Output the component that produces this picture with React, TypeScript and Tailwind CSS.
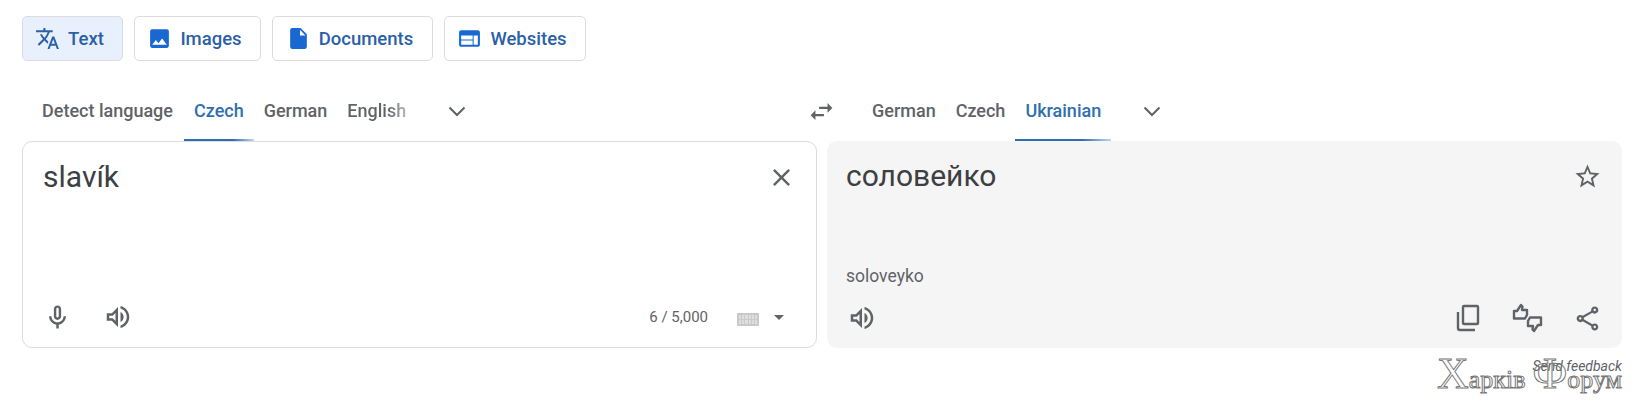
const paths = {
  translate:
    'M12.87 15.07l-2.54-2.51.03-.03c1.74-1.94 2.98-4.17 3.71-6.53H17V4h-7V2H8v2H1v1.99h11.17C11.5 7.92 10.44 9.75 9 11.35 8.07 10.32 7.3 9.19 6.69 8h-2c.73 1.63 1.73 3.17 2.98 4.56l-5.09 5.02L4 19l5-5 3.11 3.11.76-2.04zM18.5 10h-2L12 22h2l1.12-3h4.75L21 22h2l-4.5-12zm-2.62 7l1.62-4.33L19.12 17h-3.24z',
  image: 'M21 19V5c0-1.1-.9-2-2-2H5c-1.1 0-2 .9-2 2v14c0 1.1.9 2 2 2h14c1.1 0 2-.9 2-2zM8.5 13.5l2.5 3.01L14.5 12l4.5 6H5l3.5-4.5z',
  file: 'M14 2H6c-1.1 0-2 .9-2 2v16c0 1.1.9 2 2 2h12c1.1 0 2-.9 2-2V8l-6-6zm-.6 7V3.6L18.6 9h-5.2z',
  web: 'M20 4H4c-1.1 0-1.99.9-1.99 2L2 18c0 1.1.9 2 2 2h16c1.1 0 2-.9 2-2V6c0-1.1-.9-2-2-2zm-5 14H4v-4h11v4zm0-5H4V9h11v4zm5 5h-4V9h4v9z',
  mic: 'M12 14c1.66 0 3-1.34 3-3V5c0-1.66-1.34-3-3-3S9 3.34 9 5v6c0 1.66 1.34 3 3 3zm-1-9c0-.55.45-1 1-1s1 .45 1 1v6c0 .55-.45 1-1 1s-1-.45-1-1V5zM17 11c0 2.76-2.24 5-5 5s-5-2.24-5-5H5c0 3.53 2.61 6.43 6 6.92V21h2v-3.08c3.39-.49 6-3.39 6-6.92h-2z',
  volume:
    'M3 9v6h4l5 5V4L7 9H3zm7-.17v6.34L7.83 13H5v-2h2.83L10 8.83zM16.5 12c0-1.77-1.02-3.29-2.5-4.03v8.05c1.48-.73 2.5-2.25 2.5-4.02zM14 3.23v2.06c2.89.86 5 3.54 5 6.71s-2.11 5.85-5 6.71v2.06c4.01-.91 7-4.49 7-8.77 0-4.28-2.99-7.86-7-8.77z',
  close: 'M19 6.41L17.59 5 12 10.59 6.41 5 5 6.41 10.59 12 5 17.59 6.41 19 12 13.41 17.59 19 19 17.59 13.41 12z',
  star: 'M22 9.24l-7.19-.62L12 2 9.19 8.63 2 9.24l5.46 4.73L5.82 21 12 17.27 18.18 21l-1.63-7.03L22 9.24zM12 15.4l-3.76 2.27 1-4.28-3.32-2.88 4.38-.38L12 6.1l1.71 4.04 4.38.38-3.32 2.88 1 4.28L12 15.4z',
  share:
    'M18 16.08c-.76 0-1.44.3-1.96.77L8.91 12.7c.05-.23.09-.46.09-.7s-.04-.47-.09-.7l7.05-4.11c.54.5 1.25.81 2.04.81 1.66 0 3-1.34 3-3s-1.34-3-3-3-3 1.34-3 3c0 .24.04.47.09.7L8.04 9.81C7.5 9.31 6.79 9 6 9c-1.66 0-3 1.34-3 3s1.34 3 3 3c.79 0 1.5-.31 2.04-.81l7.12 4.16c-.05.21-.08.43-.08.65 0 1.61 1.31 2.92 2.92 2.92 1.61 0 2.92-1.31 2.92-2.92s-1.31-2.92-2.92-2.92zM18 4c.55 0 1 .45 1 1s-.45 1-1 1-1-.45-1-1 .45-1 1-1zM6 13c-.55 0-1-.45-1-1s.45-1 1-1 1 .45 1 1-.45 1-1 1zm12 7.02c-.55 0-1-.45-1-1s.45-1 1-1 1 .45 1 1-.45 1-1 1z',
  swap: 'M6.99 11L3 15l3.99 4v-3H14v-2H6.99v-3zM21 9l-3.99-4v3H10v2h7.01v3L21 9z',
}

function Icon({ d, className }: { d: string; className: string }) {
  return (
    <svg viewBox="0 0 24 24" fill="currentColor" className={className}>
      <path d={d} />
    </svg>
  )
}

function Chevron() {
  return (
    <svg viewBox="0 0 24 24" fill="none" stroke="currentColor" strokeWidth="2" className="h-[24px] w-[24px] text-[#5f6368]">
      <path d="M4.5 8.5 12 16l7.5-7.5" />
    </svg>
  )
}

function ModeButton({ label, d, active, width }: { label: string; d: string; active?: boolean; width: string }) {
  return (
    <button
      className={`flex h-[45px] items-center justify-center gap-[8px] rounded-[5px] border border-[#dadce0] pr-[6px] text-[18.5px] font-medium text-[#2b5fa8] ${width} ${active ? 'bg-[#e8f0fe]' : 'bg-white'}`}
    >
      <Icon d={d} className={`h-[25px] w-[25px] ${active ? 'text-[#2b5fa8]' : 'text-[#1967d2]'}`} />
      <span className="mt-[2px]">{label}</span>
    </button>
  )
}

function Tab({ label, active, fade }: { label: string; active?: boolean; fade?: boolean }) {
  return (
    <div className={`relative flex h-[50px] items-center px-[10px] pb-[12px] text-[18px] font-medium ${active ? 'text-[#2f6fb0]' : 'text-[#5f6368]'}`}>
      <span className={fade ? 'bg-linear-to-r from-[#5f6368] from-70% to-[#b5b8bb] bg-clip-text text-transparent' : ''}>{label}</span>
      {active && <span className="absolute bottom-0 left-0 right-0 h-[2px] bg-linear-to-r from-[#2f6fb0] from-70% to-[#c4d6e8]" />}
    </div>
  )
}

export default function App() {
  return (
    <div className="relative h-[415px] w-[1651px] overflow-hidden bg-white pt-[16px] font-['Roboto',sans-serif]">
      <div className="flex gap-[11px] pl-[22px]">
        <ModeButton label="Text" d={paths.translate} active width="w-[101px]" />
        <ModeButton label="Images" d={paths.image} width="w-[127px]" />
        <ModeButton label="Documents" d={paths.file} width="w-[161px]" />
        <ModeButton label="Websites" d={paths.web} width="w-[142px]" />
      </div>

      <div className="mt-[30px] flex h-[50px] items-center">
        <div className="flex w-[807px] items-center pl-[32px]">
          <Tab label="Detect language" />
          <div className="ml-[1px] flex items-center">
            <Tab label="Czech" active />
            <Tab label="German" />
            <Tab label="English" fade />
          </div>
          <div className="mb-[10px] ml-[29px]">
            <Chevron />
          </div>
        </div>
        <Icon d={paths.swap} className="mb-[10px] h-[29px] w-[29px] text-[#5f6368]" />
        <div className="ml-[26px] flex items-center">
          <Tab label="German" />
          <Tab label="Czech" />
          <Tab label="Ukrainian" active />
          <div className="mb-[10px] ml-[29px]">
            <Chevron />
          </div>
        </div>
      </div>

      <div className="flex gap-[10px] pl-[22px]">
        <div className="flex h-[207px] w-[795px] flex-col justify-between rounded-[10px] border border-[#dadce0] pb-[15px] pl-[20px] pr-[20px] pt-[15px]">
          <div className="flex items-start justify-between">
            <div className="text-[30px] leading-[40px] text-[#3c4043]">slavík</div>
            <Icon d={paths.close} className="mt-[6px] h-[29px] w-[29px] text-[#5f6368]" />
          </div>
          <div className="flex items-center">
            <Icon d={paths.mic} className="h-[29px] w-[29px] text-[#5f6368]" />
            <Icon d={paths.volume} className="ml-[31px] h-[30px] w-[30px] text-[#5f6368]" />
            <div className="ml-auto text-[15px] text-[#5f6368]">6 / 5,000</div>
            <div className="ml-[29px] mt-[5px] grid h-[13px] w-[22px] grid-cols-6 gap-px rounded-[1px] bg-[#c9c9c9] p-[2px]">
              {Array.from({ length: 12 }).map((_, i) => (
                <span key={i} className="bg-[#dedede]" />
              ))}
            </div>
            <div className="ml-[15px] mr-[12px] h-0 w-0 border-x-[5px] border-t-[5px] border-x-transparent border-t-[#5f6368]" />
          </div>
        </div>

        <div className="flex h-[207px] w-[795px] flex-col rounded-[10px] bg-[#f5f5f5] pb-[15px] pl-[19px] pr-[20px] pt-[15px]">
          <div className="flex items-start justify-between">
            <div className="text-[30px] leading-[40px] text-[#3c4043]">соловейко</div>
            <Icon d={paths.star} className="mt-[6px] h-[29px] w-[29px] text-[#5f6368]" />
          </div>
          <div className="mt-[68px] text-[17.5px] leading-[24px] text-[#5f6368]">soloveyko</div>
          <div className="mt-auto flex items-center">
            <Icon d={paths.volume} className="ml-[1px] h-[30px] w-[30px] text-[#5f6368]" />
            <svg viewBox="0 0 24 28" fill="none" stroke="currentColor" strokeWidth="2.4" className="ml-auto h-[28px] w-[24px] text-[#5f6368]">
              <rect x="7" y="2" width="15" height="18" rx="1" />
              <path d="M2 8v16a2 2 0 0 0 2 2h15" />
            </svg>
            <svg viewBox="0 0 31 30" fill="none" stroke="currentColor" strokeWidth="2.4" strokeLinejoin="round" className="ml-[32px] h-[30px] w-[31px] text-[#5f6368]">
              <path d="M2 15.5V8h3l4-6 1.5 1.5L10 7h5v5l-2 3.5z" />
              <path d="M29 14.5V22h-3l-4 6-1.5-1.5L21 23h-5v-5l2-3.5z" />
            </svg>
            <Icon d={paths.share} className="ml-[30px] h-[29px] w-[29px] text-[#5f6368]" />
          </div>
        </div>
      </div>

      {/* watermark sits on top of the feedback link */}
      <div className="absolute right-[29px] top-[356px] text-[14px] italic text-[#5f6368]">Send feedback</div>
      <div className="absolute left-[1437px] top-[349px] flex items-baseline whitespace-nowrap font-['Liberation_Serif',serif] leading-[50px] text-transparent [-webkit-text-stroke:1px_#777]">
        <span className="text-[44px]">Х</span>
        <span className="text-[26px]">арків</span>
        <span className="ml-[7px] text-[44px]">Ф</span>
        <span className="text-[26px]">орум</span>
      </div>
    </div>
  )
}
